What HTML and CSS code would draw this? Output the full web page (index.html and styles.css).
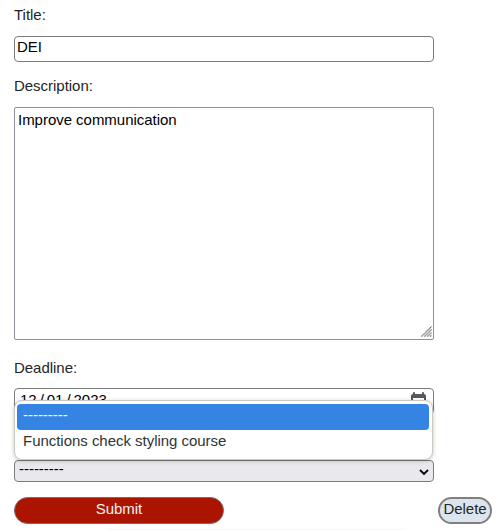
FILE: index.html
```html
<!DOCTYPE html>
<html lang="en">
<head>
<meta charset="utf-8">
<title>Edit goal</title>
<link rel="stylesheet" href="styles.css">
</head>
<body>
<form class="form">
  <div class="label">Title:</div>
  <div class="field title">DEI</div>
  <div class="label description-label">Description:</div>
  <div class="field description">Improve communication
    <svg class="grip" width="11" height="11" viewBox="0 0 11 11" fill="none" stroke="#555" stroke-width="1.1" stroke-dasharray="1.1 .4"><path d="M.5 10.5 10.5.5M3.5 10.5l7-7M6.5 10.5l4-4M9.2 10.5l1.3-1.3"/></svg>
  </div>
  <div class="label deadline-label">Deadline:</div>
  <div class="field date">
    <span class="date-value"><span>12</span><span>/</span><span>01</span><span>/</span><span>2023</span></span>
    <svg class="calendar" width="15" height="16" viewBox="0 0 15 16"><path fill="#58585c" fill-rule="evenodd" d="M2 1a1 1 0 0 1 2 0v1h7V1a1 1 0 0 1 2 0v1a2 2 0 0 1 2 2v10a2 2 0 0 1-2 2H2a2 2 0 0 1-2-2V4a2 2 0 0 1 2-2zM2 6v8h11V6z"/></svg>
  </div>
  <div class="select-wrap">
    <div class="field select"><span>---------</span>
      <svg width="10" height="7" viewBox="0 0 10 7" fill="none" stroke="#000" stroke-width="1.8"><path d="m1 1 4 4 4-4"/></svg>
    </div>
    <div class="menu">
      <div class="option selected">---------</div>
      <div class="option">Functions check styling course</div>
    </div>
  </div>
  <div class="actions">
    <button type="button" class="button submit">Submit</button>
    <button type="button" class="button delete">Delete</button>
  </div>
</form>
<div class="footer-edge"></div>
</body>
</html>
```
FILE: styles.css
```css
* { box-sizing: border-box; }
body {
  margin: 0;
  height: 531px;
  overflow: hidden;
  background: #fff;
  color: #212529;
  font: 15px/20px "Liberation Sans", Arial, sans-serif;
  letter-spacing: -.03px;
}
.form { width: 478px; margin-left: 14px; padding-top: 5px; }
.label { height: 20px; }
.field {
  width: 420px;
  border: 1px solid #7c7c80;
  border-radius: 4px;
  background: #fff;
  color: #000;
}
.title { height: 26px; margin-top: 11px; padding: 0 2px; }
.description-label { margin-top: 14px; }
.description {
  position: relative;
  height: 233px;
  margin-top: 11px;
  padding: 2px 3px;
  border-color: #8f8f9d;
  border-radius: 2px;
}
.grip { position: absolute; right: 1px; bottom: 2px; }
.deadline-label { margin-top: 18px; }
.date {
  display: flex;
  justify-content: space-between;
  height: 26px;
  margin-top: 10px;
  padding: 1px 7px 1px 5px;
}
.date-value { display: flex; gap: 3px; }
.calendar { margin-top: 2px; }
.select-wrap { position: relative; margin-top: 46px; }
.select {
  display: flex;
  justify-content: space-between;
  height: 22px;
  padding: 0 4px;
  background: #e9e9ed;
  line-height: 16px;
}
.select svg { margin-top: 8px; }
.menu {
  position: absolute;
  left: 0;
  bottom: 22px;
  width: 419px;
  height: 60px;
  padding: 3px 3px 2px 2px;
  border: 1px solid #cdc7c2;
  border-radius: 8px;
  background: #fff;
  box-shadow: 0 1px 4px rgba(0, 0, 0, .22);
}
.option { height: 26px; padding: 0 6px; line-height: 22px; color: #2e3436; }
.selected { border-radius: 4px; background: #3584e4; color: #fff; }
.actions { display: flex; justify-content: space-between; margin-top: 15px; }
.button {
  height: 27px;
  padding: 0 0 3px;
  border: 2px solid #808080;
  border-radius: 14px;
  font: inherit;
  letter-spacing: inherit;
  line-height: 20px;
}
.submit { width: 210px; border-color: #806b67; border-width: 1.5px; padding-bottom: 4px; background: #ab1500; color: #f8f4f4; }
.delete { width: 54px; background: #dce5ed; color: #212529; }
.footer-edge { width: 300px; height: 4px; margin: 6px 0 0 105px; box-shadow: 0 0 3px rgba(0, 0, 0, .08); }
```
